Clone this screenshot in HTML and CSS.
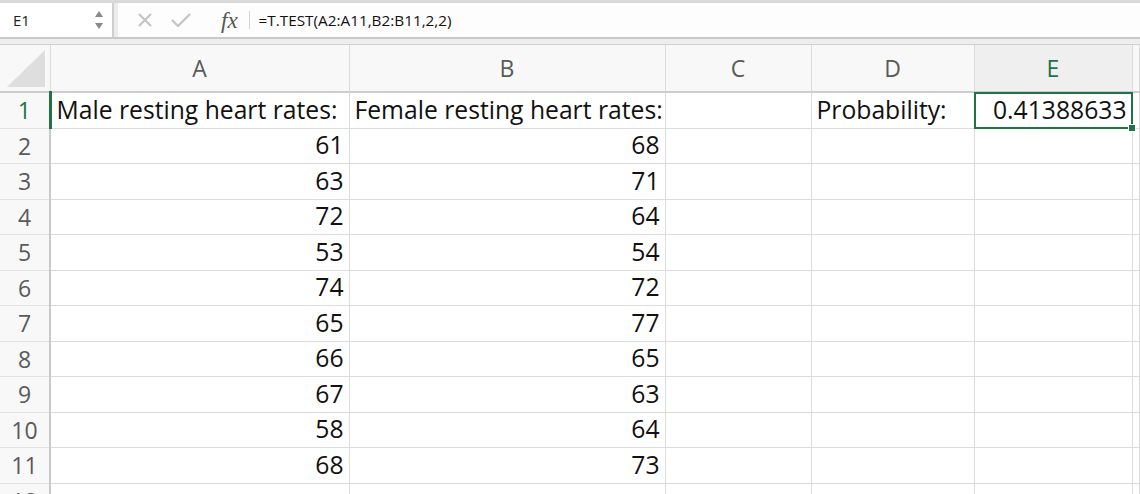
FILE: index.html
```html
<!DOCTYPE html>
<html lang="en">
<head>
    <meta charset="UTF-8">
    <title>T.TEST</title>
    <link rel="stylesheet" href="styles.css">
</head>
<body>
    <div class="formula-bar">
        <div class="name-box">
            <span class="cell-ref">E1</span>
            <svg class="spinner" width="10" height="20" viewBox="0 0 10 20">
                <path d="M1 7 L5 1 L9 7 Z" fill="#8a8a8a"/>
                <path d="M1 13 L5 19 L9 13 Z" fill="#8a8a8a"/>
            </svg>
        </div>
        <div class="bar-gap"></div>
        <div class="formula-tools">
            <svg class="tool" width="18" height="18" viewBox="0 0 18 18">
                <path d="M3 3 L15 15 M15 3 L3 15" stroke="#c4c4c4" stroke-width="2.2" fill="none"/>
            </svg>
            <svg class="tool" width="22" height="18" viewBox="0 0 22 18">
                <path d="M2 9 L8 15 L20 3" stroke="#c4c4c4" stroke-width="2.2" fill="none"/>
            </svg>
            <span class="fx">fx</span>
            <span class="fx-sep"></span>
            <span class="formula">=T.TEST(A2:A11,B2:B11,2,2)</span>
        </div>
    </div>
    <div class="bar-strip"></div>

    <table class="sheet">
        <colgroup>
            <col style="width: 50px">
            <col style="width: 299px">
            <col style="width: 316px">
            <col style="width: 146px">
            <col style="width: 163px">
            <col style="width: 158px">
            <col>
        </colgroup>
        <thead>
            <tr>
                <th class="corner">
                    <svg width="50" height="46" viewBox="0 0 50 46">
                        <path d="M7 42 L45 42 L45 5 Z" fill="#dedede"/>
                    </svg>
                </th>
                <th>A</th>
                <th>B</th>
                <th>C</th>
                <th>D</th>
                <th class="active">E</th>
                <th></th>
            </tr>
        </thead>
        <tbody id="rows"></tbody>
    </table>

    <script>
        const male = [61, 63, 72, 53, 74, 65, 66, 67, 58, 68];
        const female = [68, 71, 64, 54, 72, 77, 65, 63, 64, 73];
        const body = document.getElementById('rows');

        function addRow(num, cells, active) {
            const tr = document.createElement('tr');
            const th = document.createElement('th');
            th.className = 'row-head' + (active ? ' active' : '');
            th.textContent = num;
            tr.appendChild(th);
            cells.forEach(c => {
                const td = document.createElement('td');
                if (c && c.cls) td.className = c.cls;
                if (c && c.html) td.innerHTML = c.html;
                else if (c) td.textContent = c.text;
                tr.appendChild(td);
            });
            body.appendChild(tr);
        }

        addRow(1, [
            { text: 'Male resting heart rates:' },
            { text: 'Female resting heart rates:' },
            null,
            { text: 'Probability:' },
            { cls: 'num selected', html: '0.41388633<span class="sel-box"><span class="handle"></span></span>' },
            null
        ], true);

        for (let i = 0; i < male.length; i++) {
            addRow(i + 2, [
                { cls: 'num', text: male[i] },
                { cls: 'num', text: female[i] },
                null, null, null, null
            ]);
        }
        addRow(12, [null, null, null, null, null, null]);
    </script>
</body>
</html>
```

FILE: styles.css
```css
body {
    margin: 0;
    background-color: #ffffff;
    font-family: "Open Sans", "Noto Sans", sans-serif;
    overflow: hidden;
    width: 1140px;
    height: 494px;
}

.formula-bar {
    display: flex;
    height: 34px;
    border-top: 3px solid #d9d9d9;
    border-bottom: 2px solid #c9c9c9;
    background-color: #fdfdfd;
}

.name-box {
    width: 114px;
    display: flex;
    align-items: center;
    justify-content: space-between;
    padding: 0 8px 0 13px;
    box-sizing: border-box;
    border-right: 2px solid #cfcfcf;
    background-color: #ffffff;
}

.cell-ref {
    font-size: 15px;
    color: #222;
}

.bar-gap {
    width: 4px;
    background-color: #ececec;
}

.formula-tools {
    flex: 1;
    display: flex;
    align-items: center;
    padding-left: 18px;
}

.tool {
    margin-right: 16px;
}

.fx {
    font-family: "Liberation Serif", serif;
    font-style: italic;
    font-size: 23px;
    color: #555;
    margin-left: 13px;
    margin-right: 11px;
    line-height: 1;
}

.fx-sep {
    width: 1px;
    height: 18px;
    background-color: #d6d6d6;
    margin-right: 9px;
}

.formula {
    font-size: 15.3px;
    color: #111;
}

.bar-strip {
    height: 5px;
    background-color: #eeeeee;
    border-bottom: 1px solid #d0d0d0;
}

.sheet {
    border-collapse: collapse;
    table-layout: fixed;
    width: 1140px;
}

.sheet th {
    background-color: #f8f8f8;
    color: #5a5a5a;
    font-weight: normal;
    font-size: 23px;
    border-right: 1px solid #dcdcdc;
    padding: 0;
}

.sheet thead th {
    height: 45px;
    border-bottom: 2px solid #cdcdcd;
}

.sheet thead th.active {
    background-color: #efefef;
    color: #217346;
}

.corner {
    vertical-align: top;
    line-height: 0;
}

.row-head {
    height: 34.5px;
    border-bottom: 1px solid #e2e2e2;
    border-right: 2px solid #c9c9c9 !important;
    text-align: center;
}

.row-head.active {
    color: #217346;
    border-right: 3px solid #217346 !important;
}

.sheet td {
    height: 34.5px;
    padding: 0 5px;
    border-right: 1px solid #dcdcdc;
    border-bottom: 1px solid #dcdcdc;
    font-size: 24.7px;
    line-height: 1;
    color: #111;
    white-space: nowrap;
    overflow: visible;
}

.sheet td.num {
    text-align: right;
}

.selected {
    position: relative;
}

.sel-box {
    position: absolute;
    left: -1px;
    top: -1px;
    right: -1px;
    bottom: -1px;
    border: 2px solid #217346;
}

.handle {
    position: absolute;
    right: -5px;
    bottom: -5px;
    width: 6px;
    height: 6px;
    background-color: #217346;
    border: 1px solid #ffffff;
}
```
